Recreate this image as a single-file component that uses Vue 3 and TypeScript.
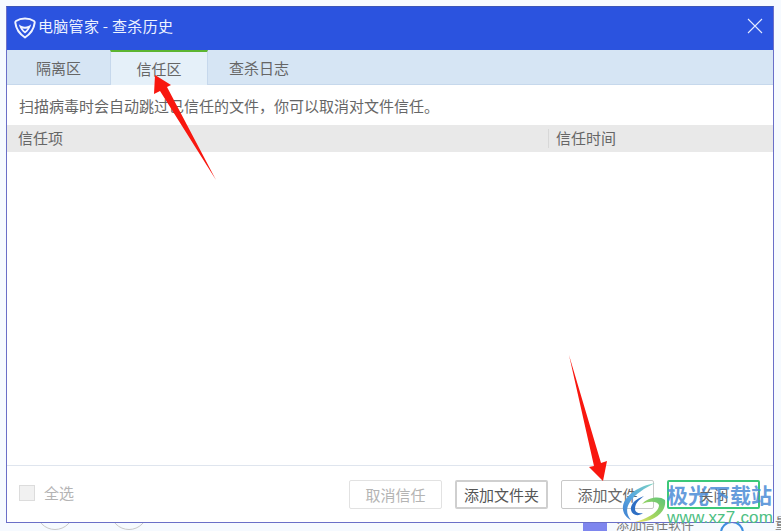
<template>
  <div class="page">
    <div class="window">
      <header class="titlebar">
        <svg class="logo" width="22" height="22" viewBox="0 0 22 22">
          <path d="M11 1.5 C14.5 1.5 17.6 2.4 20 4 C20.6 4.4 20.8 5 20.7 5.7 C20 11.5 16.5 17 11 20.5 C5.5 17 2 11.5 1.3 5.7 C1.2 5 1.4 4.4 2 4 C4.4 2.4 7.5 1.5 11 1.5 Z" fill="none" stroke="#f0f4ff" stroke-width="2" stroke-linejoin="round" />
          <path d="M4.8 7.2 C8 10.5 14 10.5 17.2 7.2 C16.4 11 14 14.4 11 16.6 C8 14.4 5.6 11 4.8 7.2 Z M8.4 11.2 C9.2 12.4 10 13.4 11 14.2 C12 13.4 12.8 12.4 13.6 11.2 C11.8 11.9 10.2 11.9 8.4 11.2 Z" fill="#f0f4ff" fill-rule="evenodd" />
        </svg>
        <span class="title">电脑管家 - 查杀历史</span>
        <svg class="close-x" width="16" height="16" viewBox="0 0 16 16">
          <path d="M1 1 L15 15 M15 1 L1 15" stroke="#e4ebff" stroke-width="1.1" fill="none" />
        </svg>
      </header>

      <nav class="tabs">
        <div
          v-for="tab in tabs"
          :key="tab.name"
          class="tab"
          :class="{ active: tab.name === activeTab }"
          :style="{ width: tab.width + 'px' }"
        >
          {{ tab.name }}
        </div>
      </nav>

      <p class="desc">扫描病毒时会自动跳过已信任的文件，你可以取消对文件信任。</p>

      <div class="table-head">
        <div class="col-item">信任项</div>
        <div class="col-time">信任时间</div>
      </div>

      <div class="table-body"></div>

      <footer class="footer">
        <label class="check-all">
          <span class="checkbox"></span>
          <span>全选</span>
        </label>
        <div class="actions">
          <button class="btn disabled">取消信任</button>
          <button class="btn strong">添加文件夹</button>
          <button class="btn">添加文件</button>
          <button class="btn focus">关闭</button>
        </div>
      </footer>
    </div>

    <!-- 窗口下方露出的背景内容 -->
    <div class="behind">
      <span class="arc arc-one"></span>
      <span class="arc arc-two"></span>
      <span class="blue-block"></span>
      <span class="behind-text">添加信任软件</span>
      <span class="arc arc-blue"></span>
    </div>
    <span class="edge-text">量</span>

    <!-- 红色箭头标注 -->
    <svg class="arrow" width="781" height="531" viewBox="0 0 781 531">
      <path d="M155 75 L171 85 L167 87 L216 180 L160 91 L154 94 Z" fill="#f8170f" />
      <path d="M569 355 L601 463 L607 461 L603 481 L589 467 L594 466 Z" fill="#f8170f" />
    </svg>

    <!-- 水印 -->
    <div class="watermark">
      <svg class="wm-logo" width="46" height="42" viewBox="0 0 46 42">
        <defs>
          <linearGradient id="swirlTop" x1="1" y1="0" x2="0" y2="1">
            <stop offset="0" stop-color="#7fd6c0" />
            <stop offset="0.55" stop-color="#58a8e0" />
            <stop offset="1" stop-color="#3f7fd0" />
          </linearGradient>
          <linearGradient id="swirlLow" x1="1" y1="0" x2="0" y2="1">
            <stop offset="0" stop-color="#5cc47a" />
            <stop offset="0.6" stop-color="#a6d65e" />
            <stop offset="1" stop-color="#efe36a" />
          </linearGradient>
        </defs>
        <path d="M34 1 C18 4 4 13 2 24 C1 30 5 36 10 38 C5 32 5 26 9 20 C14 12 24 6 34 1 Z" fill="url(#swirlTop)" />
        <path d="M23 14 C14 17 9 23 10 28 C11 33 17 35 22 31 C17 32 14 30 14 27 C14 21 18 18 23 14 Z" fill="#2f6fc4" />
        <path d="M44 18 C38 13 26 16 21 22 C28 19 36 19 38 23 C38 30 28 36 14 40 C30 41 46 32 44 18 Z" fill="url(#swirlLow)" />
      </svg>
      <div class="wm-text">
        <div class="wm-cn">极光下载站</div>
        <div class="wm-url">www.xz7.com</div>
      </div>
    </div>
  </div>
</template>

<script setup lang="ts">
interface TabItem {
  name: string
  width: number
}

const activeTab = '信任区'

const tabs: TabItem[] = [
  { name: '隔离区', width: 103 },
  { name: '信任区', width: 98 },
  { name: '查杀日志', width: 102 },
]
</script>

<style>
html,
body {
  margin: 0;
  background: #f6faff;
  overflow: hidden;
}
</style>

<style scoped>
.page {
  position: relative;
  width: 781px;
  height: 531px;
  overflow: hidden;
  padding: 6px 6px 0 6px;
  box-sizing: border-box;
  font-family: "Noto Sans CJK SC", "Liberation Sans", sans-serif;
  color: #555;
}

.window {
  width: 768px;
  height: 517px;
  box-sizing: border-box;
  border: 1px solid #6a6fc8;
  border-top-color: #3a55b8;
  background: #fff;
  display: flex;
  flex-direction: column;
}

.titlebar {
  height: 43px;
  flex: none;
  background: #2b53df;
  display: flex;
  align-items: center;
  padding: 0 10px 6px 7px;
  box-sizing: border-box;
  color: #eef3ff;
}

.logo {
  margin-right: 2px;
  margin-top: 5px;
}

.title {
  font-size: 15px;
  letter-spacing: 0.3px;
}

.close-x {
  margin-left: auto;
}

.tabs {
  height: 35px;
  flex: none;
  display: flex;
  background: #d6e5f4;
  border-bottom: 1px solid #c6d8ec;
  box-sizing: border-box;
}

.tab {
  display: flex;
  align-items: center;
  justify-content: center;
  font-size: 15px;
  color: #666;
  box-sizing: border-box;
}

.tab.active {
  background: #e5f0f9;
  border-top: 2px solid #5cb531;
  border-left: 1px solid #c6d8ec;
  border-right: 1px solid #c6d8ec;
  height: 35px;
}

.desc {
  margin: 0;
  height: 40px;
  flex: none;
  display: flex;
  align-items: center;
  padding-left: 12px;
  box-sizing: border-box;
  font-size: 15px;
  color: #666;
}

.table-head {
  height: 27px;
  flex: none;
  background: #e9e9e9;
  display: flex;
  align-items: center;
  font-size: 15px;
  color: #666;
}

.col-item {
  width: 541px;
  padding-left: 11px;
  padding-bottom: 3px;
  box-sizing: border-box;
}

.col-time {
  border-left: 1px solid #d8d8d8;
  padding-left: 7px;
  height: 19px;
  line-height: 17px;
}

.table-body {
  flex: 1;
}

.footer {
  height: 57px;
  flex: none;
  border-top: 1px solid #dfe5ee;
  display: flex;
  align-items: center;
  justify-content: space-between;
  padding: 0 13px 0 12px;
  box-sizing: border-box;
}

.check-all {
  display: flex;
  align-items: center;
  gap: 9px;
  font-size: 15px;
  color: #b4b4b4;
  margin-top: -3px;
}

.checkbox {
  width: 16px;
  height: 16px;
  background: #f1f1f1;
  border: 1px solid #dcdcdc;
  box-sizing: border-box;
}

.actions {
  display: flex;
  gap: 13px;
}

.btn {
  height: 29px;
  width: 93px;
  padding: 0;
  box-sizing: border-box;
  background: #fff;
  border: 1px solid #c8c8c8;
  border-radius: 2px;
  font-family: inherit;
  font-size: 15px;
  color: #666;
}

.btn.disabled {
  border-color: #e2e2e2;
  color: #b4b4b4;
}

.btn.strong {
  border: 2px solid #cfcfcf;
  color: #555;
}

.btn.focus {
  border: 2px solid #3cc878;
}

.behind {
  position: absolute;
  left: 0;
  top: 523px;
  width: 100%;
  height: 8px;
  overflow: hidden;
}

.arc {
  position: absolute;
  top: -31px;
  width: 36px;
  height: 36px;
  border: 1px solid #c9c9c9;
  border-radius: 50%;
}

.arc-one {
  left: 36px;
}

.arc-two {
  left: 110px;
}

.arc-blue {
  left: 720px;
  top: -2px;
  width: 20px;
  height: 20px;
  border: 2px solid #3f8fe0;
}

.blue-block {
  position: absolute;
  left: 583px;
  top: 0;
  width: 24px;
  height: 8px;
  background: #7e86ee;
}

.behind-text {
  position: absolute;
  left: 616px;
  top: -7px;
  font-size: 13px;
  line-height: 16px;
  color: #777;
  white-space: nowrap;
}

.edge-text {
  position: absolute;
  left: 775px;
  top: 514px;
  font-size: 14px;
  line-height: 17px;
  color: #777;
}

.arrow {
  position: absolute;
  left: 0;
  top: 0;
  pointer-events: none;
}

.watermark {
  position: absolute;
  left: 621px;
  top: 480px;
  display: flex;
  align-items: flex-start;
}

.wm-logo {
  flex: none;
  margin-top: 2px;
}

.wm-cn {
  font-size: 21px;
  line-height: 28px;
  font-weight: 700;
  color: rgba(74, 140, 214, 0.85);
  white-space: nowrap;
}

.wm-url {
  font-family: "Liberation Sans", sans-serif;
  font-size: 17px;
  line-height: 18px;
  letter-spacing: 0.2px;
  color: #4ec083;
  white-space: nowrap;
  margin-top: 1px;
}
</style>
